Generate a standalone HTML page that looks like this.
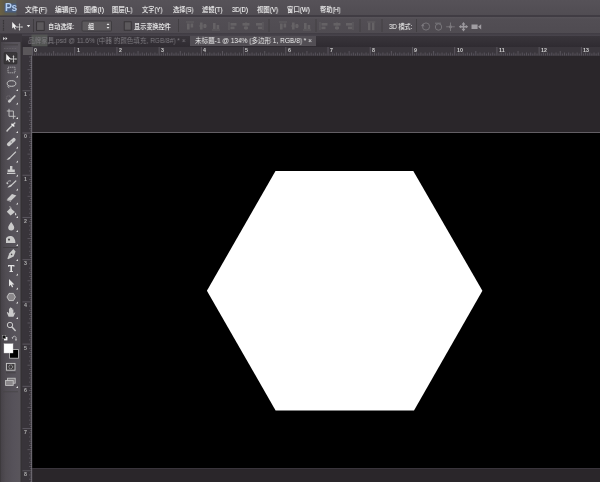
<!DOCTYPE html>
<html lang="zh-CN"><head><meta charset="utf-8"><title>Photoshop</title><style>
html,body{margin:0;padding:0;}
body{width:600px;height:482px;overflow:hidden;background:#2a262a;position:relative;font-family:"Liberation Sans", "Noto Sans CJK SC", sans-serif;font-size:7.2px;line-height:9px;color:#e6e6e6;}
div,span{position:absolute;white-space:nowrap;}
span{transform-origin:0 50%;will-change:transform;}
#menubar{left:0;top:0;width:600px;height:16px;background:linear-gradient(#565258,#504c52);}
#menuline{left:0;top:15.4px;width:600px;height:1.2px;background:#403c43;}
#optbar{left:0;top:16.6px;width:600px;height:17px;background:linear-gradient(#58545a 0,#524e54 12%,#4f4b51 100%);}
#optline{left:0;top:33.2px;width:600px;height:2.6px;background:linear-gradient(#403c43,#48444c);}
#tabrow{left:21px;top:35.6px;width:579px;height:11px;background:linear-gradient(#39353b,#2f2b31);}
#tab2{left:190px;top:36.2px;width:125.5px;height:9.6px;background:#524e54;}
#hruler{left:22px;top:46.5px;width:578px;height:9px;background:#3a363c;}
#vruler{left:22.3px;top:46.5px;width:9.7px;height:436px;background:#38343a;}
#corner{left:22.5px;top:46.5px;width:9px;height:8px;background:#5a575a;}
#toolbar{left:0;top:34px;width:21.5px;height:448px;background:linear-gradient(90deg,#444046 0,#504c52 25%,#56525a 60%,#5a565c 100%);}
#toolhead{left:0;top:34px;width:21.5px;height:8px;background:#3a363c;}
#canvas{left:32px;top:133px;width:568px;height:335px;background:#000;}
#canvastop{left:32px;top:132px;width:568px;height:1px;background:#625e64;}
.m{top:4.8px;color:#f2f2f2;transform:scaleX(0.93);text-shadow:0 0 0.6px rgba(255,255,255,0.55);}
.o{top:21.8px;color:#f2f2f2;transform:scaleX(0.85);text-shadow:0 0 0.6px rgba(255,255,255,0.55);}
.t{top:36.3px;transform:scaleX(0.91);}
.rn{font-size:5.3px;line-height:6px;color:#cfcfcf;font-weight:bold;}
svg{position:absolute;left:0;top:0;}
span{z-index:2;}
</style></head><body>
<div id="menubar"></div><div id="menuline"></div><div id="optbar"></div><div id="optline"></div>
<div id="tabrow"></div><div id="tab2"></div><div id="hruler"></div><div id="vruler"></div><div id="corner"></div>
<div id="toolbar"></div><div id="toolhead"></div>
<div id="canvastop"></div><div id="canvas"></div>
<span class="m" style="left:24.5px;transform:scaleX(0.932)">文件(F)</span>
<span class="m" style="left:55px;transform:scaleX(0.917)">编辑(E)</span>
<span class="m" style="left:84px;transform:scaleX(0.943)">图像(I)</span>
<span class="m" style="left:112px;transform:scaleX(0.884)">图层(L)</span>
<span class="m" style="left:142.3px;transform:scaleX(0.854)">文字(Y)</span>
<span class="m" style="left:172.6px;transform:scaleX(0.850)">选择(S)</span>
<span class="m" style="left:201.8px;transform:scaleX(0.873)">滤镜(T)</span>
<span class="m" style="left:232px;transform:scaleX(0.833)">3D(D)</span>
<span class="m" style="left:256.8px;transform:scaleX(0.883)">视图(V)</span>
<span class="m" style="left:287px;transform:scaleX(0.885)">窗口(W)</span>
<span class="m" style="left:319.7px;transform:scaleX(0.844)">帮助(H)</span>
<span style="left:4.6px;top:2px;font-size:10.3px;line-height:12px;font-weight:bold;color:#b4cff0;letter-spacing:-0.3px;z-index:3">Ps</span>
<span class="o" style="left:48px">自动选择:</span>
<span class="o" style="left:88px">组</span>
<span class="o" style="left:134px">显示变换控件</span>
<span class="o" style="left:388.5px;color:#dedede">3D 模式:</span>
<span class="t" style="left:28px;color:#7e7b80">品牌家具.psd @ 11.6% (中器 的颜色填充, RGB/8#) * ×</span>
<span class="t" style="left:195px;color:#f0f0f0">未标题-1 @ 134% (多边形 1, RGB/8) * ×</span>
<span class="rn" style="left:34.3px;top:46.7px">0</span>
<span class="rn" style="left:76.5px;top:46.7px">1</span>
<span class="rn" style="left:118.7px;top:46.7px">2</span>
<span class="rn" style="left:161.0px;top:46.7px">3</span>
<span class="rn" style="left:203.2px;top:46.7px">4</span>
<span class="rn" style="left:245.4px;top:46.7px">5</span>
<span class="rn" style="left:287.6px;top:46.7px">6</span>
<span class="rn" style="left:329.8px;top:46.7px">7</span>
<span class="rn" style="left:372.1px;top:46.7px">8</span>
<span class="rn" style="left:414.3px;top:46.7px">9</span>
<span class="rn" style="left:456.5px;top:46.7px">10</span>
<span class="rn" style="left:498.7px;top:46.7px">11</span>
<span class="rn" style="left:540.9px;top:46.7px">12</span>
<span class="rn" style="left:583.2px;top:46.7px">13</span>
<span class="rn" style="left:24.3px;top:91.2px;color:#aeaeae">1</span>
<span class="rn" style="left:24.3px;top:133.4px;color:#aeaeae">0</span>
<span class="rn" style="left:24.3px;top:175.6px;color:#aeaeae">1</span>
<span class="rn" style="left:24.3px;top:217.8px;color:#aeaeae">2</span>
<span class="rn" style="left:24.3px;top:260.1px;color:#aeaeae">3</span>
<span class="rn" style="left:24.3px;top:302.3px;color:#aeaeae">4</span>
<span class="rn" style="left:24.3px;top:344.5px;color:#aeaeae">5</span>
<span class="rn" style="left:24.3px;top:386.7px;color:#aeaeae">6</span>
<span class="rn" style="left:24.3px;top:428.9px;color:#aeaeae">7</span>
<span class="rn" style="left:24.3px;top:471.2px;color:#aeaeae">8</span>
<svg width="600" height="482" viewBox="0 0 600 482">
<polygon points="275.5,171 413.3,171 482.4,290.7 414,410.4 275.6,410.4 206.9,290.7" fill="#fff"/>
<path d="M34.61 53.5V55.5 M36.72 52.5V55.5 M38.83 53.5V55.5 M40.94 52.5V55.5 M43.05 53.5V55.5 M45.17 52.5V55.5 M47.28 53.5V55.5 M49.39 52.5V55.5 M51.50 53.5V55.5 M53.61 51.0V55.5 M55.72 53.5V55.5 M57.83 52.5V55.5 M59.94 53.5V55.5 M62.05 52.5V55.5 M64.16 53.5V55.5 M66.28 52.5V55.5 M68.39 53.5V55.5 M70.50 52.5V55.5 M72.61 53.5V55.5 M76.83 53.5V55.5 M78.94 52.5V55.5 M81.05 53.5V55.5 M83.16 52.5V55.5 M85.28 53.5V55.5 M87.39 52.5V55.5 M89.50 53.5V55.5 M91.61 52.5V55.5 M93.72 53.5V55.5 M95.83 51.0V55.5 M97.94 53.5V55.5 M100.05 52.5V55.5 M102.16 53.5V55.5 M104.27 52.5V55.5 M106.38 53.5V55.5 M108.50 52.5V55.5 M110.61 53.5V55.5 M112.72 52.5V55.5 M114.83 53.5V55.5 M119.05 53.5V55.5 M121.16 52.5V55.5 M123.27 53.5V55.5 M125.38 52.5V55.5 M127.50 53.5V55.5 M129.61 52.5V55.5 M131.72 53.5V55.5 M133.83 52.5V55.5 M135.94 53.5V55.5 M138.05 51.0V55.5 M140.16 53.5V55.5 M142.27 52.5V55.5 M144.38 53.5V55.5 M146.49 52.5V55.5 M148.60 53.5V55.5 M150.72 52.5V55.5 M152.83 53.5V55.5 M154.94 52.5V55.5 M157.05 53.5V55.5 M161.27 53.5V55.5 M163.38 52.5V55.5 M165.49 53.5V55.5 M167.60 52.5V55.5 M169.72 53.5V55.5 M171.83 52.5V55.5 M173.94 53.5V55.5 M176.05 52.5V55.5 M178.16 53.5V55.5 M180.27 51.0V55.5 M182.38 53.5V55.5 M184.49 52.5V55.5 M186.60 53.5V55.5 M188.71 52.5V55.5 M190.82 53.5V55.5 M192.94 52.5V55.5 M195.05 53.5V55.5 M197.16 52.5V55.5 M199.27 53.5V55.5 M203.49 53.5V55.5 M205.60 52.5V55.5 M207.71 53.5V55.5 M209.82 52.5V55.5 M211.94 53.5V55.5 M214.05 52.5V55.5 M216.16 53.5V55.5 M218.27 52.5V55.5 M220.38 53.5V55.5 M222.49 51.0V55.5 M224.60 53.5V55.5 M226.71 52.5V55.5 M228.82 53.5V55.5 M230.93 52.5V55.5 M233.04 53.5V55.5 M235.16 52.5V55.5 M237.27 53.5V55.5 M239.38 52.5V55.5 M241.49 53.5V55.5 M245.71 53.5V55.5 M247.82 52.5V55.5 M249.93 53.5V55.5 M252.04 52.5V55.5 M254.16 53.5V55.5 M256.27 52.5V55.5 M258.38 53.5V55.5 M260.49 52.5V55.5 M262.60 53.5V55.5 M264.71 51.0V55.5 M266.82 53.5V55.5 M268.93 52.5V55.5 M271.04 53.5V55.5 M273.15 52.5V55.5 M275.26 53.5V55.5 M277.38 52.5V55.5 M279.49 53.5V55.5 M281.60 52.5V55.5 M283.71 53.5V55.5 M287.93 53.5V55.5 M290.04 52.5V55.5 M292.15 53.5V55.5 M294.26 52.5V55.5 M296.38 53.5V55.5 M298.49 52.5V55.5 M300.60 53.5V55.5 M302.71 52.5V55.5 M304.82 53.5V55.5 M306.93 51.0V55.5 M309.04 53.5V55.5 M311.15 52.5V55.5 M313.26 53.5V55.5 M315.37 52.5V55.5 M317.49 53.5V55.5 M319.60 52.5V55.5 M321.71 53.5V55.5 M323.82 52.5V55.5 M325.93 53.5V55.5 M330.15 53.5V55.5 M332.26 52.5V55.5 M334.37 53.5V55.5 M336.48 52.5V55.5 M338.59 53.5V55.5 M340.71 52.5V55.5 M342.82 53.5V55.5 M344.93 52.5V55.5 M347.04 53.5V55.5 M349.15 51.0V55.5 M351.26 53.5V55.5 M353.37 52.5V55.5 M355.48 53.5V55.5 M357.59 52.5V55.5 M359.70 53.5V55.5 M361.82 52.5V55.5 M363.93 53.5V55.5 M366.04 52.5V55.5 M368.15 53.5V55.5 M372.37 53.5V55.5 M374.48 52.5V55.5 M376.59 53.5V55.5 M378.70 52.5V55.5 M380.81 53.5V55.5 M382.93 52.5V55.5 M385.04 53.5V55.5 M387.15 52.5V55.5 M389.26 53.5V55.5 M391.37 51.0V55.5 M393.48 53.5V55.5 M395.59 52.5V55.5 M397.70 53.5V55.5 M399.81 52.5V55.5 M401.93 53.5V55.5 M404.04 52.5V55.5 M406.15 53.5V55.5 M408.26 52.5V55.5 M410.37 53.5V55.5 M414.59 53.5V55.5 M416.70 52.5V55.5 M418.81 53.5V55.5 M420.92 52.5V55.5 M423.04 53.5V55.5 M425.15 52.5V55.5 M427.26 53.5V55.5 M429.37 52.5V55.5 M431.48 53.5V55.5 M433.59 51.0V55.5 M435.70 53.5V55.5 M437.81 52.5V55.5 M439.92 53.5V55.5 M442.03 52.5V55.5 M444.15 53.5V55.5 M446.26 52.5V55.5 M448.37 53.5V55.5 M450.48 52.5V55.5 M452.59 53.5V55.5 M456.81 53.5V55.5 M458.92 52.5V55.5 M461.03 53.5V55.5 M463.14 52.5V55.5 M465.25 53.5V55.5 M467.37 52.5V55.5 M469.48 53.5V55.5 M471.59 52.5V55.5 M473.70 53.5V55.5 M475.81 51.0V55.5 M477.92 53.5V55.5 M480.03 52.5V55.5 M482.14 53.5V55.5 M484.25 52.5V55.5 M486.37 53.5V55.5 M488.48 52.5V55.5 M490.59 53.5V55.5 M492.70 52.5V55.5 M494.81 53.5V55.5 M499.03 53.5V55.5 M501.14 52.5V55.5 M503.25 53.5V55.5 M505.36 52.5V55.5 M507.47 53.5V55.5 M509.59 52.5V55.5 M511.70 53.5V55.5 M513.81 52.5V55.5 M515.92 53.5V55.5 M518.03 51.0V55.5 M520.14 53.5V55.5 M522.25 52.5V55.5 M524.36 53.5V55.5 M526.47 52.5V55.5 M528.58 53.5V55.5 M530.70 52.5V55.5 M532.81 53.5V55.5 M534.92 52.5V55.5 M537.03 53.5V55.5 M541.25 53.5V55.5 M543.36 52.5V55.5 M545.47 53.5V55.5 M547.58 52.5V55.5 M549.69 53.5V55.5 M551.81 52.5V55.5 M553.92 53.5V55.5 M556.03 52.5V55.5 M558.14 53.5V55.5 M560.25 51.0V55.5 M562.36 53.5V55.5 M564.47 52.5V55.5 M566.58 53.5V55.5 M568.69 52.5V55.5 M570.80 53.5V55.5 M572.92 52.5V55.5 M575.03 53.5V55.5 M577.14 52.5V55.5 M579.25 53.5V55.5 M583.47 53.5V55.5 M585.58 52.5V55.5 M587.69 53.5V55.5 M589.80 52.5V55.5 M591.91 53.5V55.5 M594.03 52.5V55.5 M596.14 53.5V55.5 M598.25 52.5V55.5" stroke="#66626a" stroke-width="0.7" fill="none"/>
<path d="M32.50 47V55.5 M74.72 47V55.5 M116.94 47V55.5 M159.16 47V55.5 M201.38 47V55.5 M243.60 47V55.5 M285.82 47V55.5 M328.04 47V55.5 M370.26 47V55.5 M412.48 47V55.5 M454.70 47V55.5 M496.92 47V55.5 M539.14 47V55.5 M581.36 47V55.5" stroke="#6a666e" stroke-width="0.7" fill="none"/>
<path d="M29 57.00H32 M30 59.12H32 M29 61.23H32 M30 63.34H32 M29 65.45H32 M30 67.56H32 M27.5 69.67H32 M30 71.78H32 M29 73.89H32 M30 76.00H32 M29 78.11H32 M30 80.22H32 M29 82.34H32 M30 84.45H32 M29 86.56H32 M30 88.67H32 M30 92.89H32 M29 95.00H32 M30 97.11H32 M29 99.22H32 M30 101.34H32 M29 103.45H32 M30 105.56H32 M29 107.67H32 M30 109.78H32 M27.5 111.89H32 M30 114.00H32 M29 116.11H32 M30 118.22H32 M29 120.33H32 M30 122.44H32 M29 124.56H32 M30 126.67H32 M29 128.78H32 M30 130.89H32 M30 135.11H32 M29 137.22H32 M30 139.33H32 M29 141.44H32 M30 143.56H32 M29 145.67H32 M30 147.78H32 M29 149.89H32 M30 152.00H32 M27.5 154.11H32 M30 156.22H32 M29 158.33H32 M30 160.44H32 M29 162.55H32 M30 164.66H32 M29 166.78H32 M30 168.89H32 M29 171.00H32 M30 173.11H32 M30 177.33H32 M29 179.44H32 M30 181.55H32 M29 183.66H32 M30 185.78H32 M29 187.89H32 M30 190.00H32 M29 192.11H32 M30 194.22H32 M27.5 196.33H32 M30 198.44H32 M29 200.55H32 M30 202.66H32 M29 204.77H32 M30 206.88H32 M29 209.00H32 M30 211.11H32 M29 213.22H32 M30 215.33H32 M30 219.55H32 M29 221.66H32 M30 223.77H32 M29 225.88H32 M30 228.00H32 M29 230.11H32 M30 232.22H32 M29 234.33H32 M30 236.44H32 M27.5 238.55H32 M30 240.66H32 M29 242.77H32 M30 244.88H32 M29 246.99H32 M30 249.10H32 M29 251.22H32 M30 253.33H32 M29 255.44H32 M30 257.55H32 M30 261.77H32 M29 263.88H32 M30 265.99H32 M29 268.10H32 M30 270.21H32 M29 272.33H32 M30 274.44H32 M29 276.55H32 M30 278.66H32 M27.5 280.77H32 M30 282.88H32 M29 284.99H32 M30 287.10H32 M29 289.21H32 M30 291.32H32 M29 293.44H32 M30 295.55H32 M29 297.66H32 M30 299.77H32 M30 303.99H32 M29 306.10H32 M30 308.21H32 M29 310.32H32 M30 312.44H32 M29 314.55H32 M30 316.66H32 M29 318.77H32 M30 320.88H32 M27.5 322.99H32 M30 325.10H32 M29 327.21H32 M30 329.32H32 M29 331.43H32 M30 333.55H32 M29 335.66H32 M30 337.77H32 M29 339.88H32 M30 341.99H32 M30 346.21H32 M29 348.32H32 M30 350.43H32 M29 352.54H32 M30 354.66H32 M29 356.77H32 M30 358.88H32 M29 360.99H32 M30 363.10H32 M27.5 365.21H32 M30 367.32H32 M29 369.43H32 M30 371.54H32 M29 373.65H32 M30 375.77H32 M29 377.88H32 M30 379.99H32 M29 382.10H32 M30 384.21H32 M30 388.43H32 M29 390.54H32 M30 392.65H32 M29 394.76H32 M30 396.88H32 M29 398.99H32 M30 401.10H32 M29 403.21H32 M30 405.32H32 M27.5 407.43H32 M30 409.54H32 M29 411.65H32 M30 413.76H32 M29 415.87H32 M30 417.99H32 M29 420.10H32 M30 422.21H32 M29 424.32H32 M30 426.43H32 M30 430.65H32 M29 432.76H32 M30 434.87H32 M29 436.98H32 M30 439.09H32 M29 441.21H32 M30 443.32H32 M29 445.43H32 M30 447.54H32 M27.5 449.65H32 M30 451.76H32 M29 453.87H32 M30 455.98H32 M29 458.09H32 M30 460.20H32 M29 462.32H32 M30 464.43H32 M29 466.54H32 M30 468.65H32 M30 472.87H32 M29 474.98H32 M30 477.09H32 M29 479.20H32 M30 481.31H32" stroke="#66626a" stroke-width="0.7" fill="none"/>
<path d="M22.5 90.78H32 M22.5 133.00H32 M22.5 175.22H32 M22.5 217.44H32 M22.5 259.66H32 M22.5 301.88H32 M22.5 344.10H32 M22.5 386.32H32 M22.5 428.54H32 M22.5 470.76H32" stroke="#6a666e" stroke-width="0.7" fill="none"/>
<path d="M31.7 55.5V482" stroke="#85818a" stroke-width="0.7"/><path d="M32 468.5H600" stroke="#3d3940" stroke-width="0.8"/>
<g style="filter:blur(0.3px)"><rect x="0" y="34" width="1" height="448" fill="#3d3a3d"/><rect x="20.5" y="42" width="1.5" height="440" fill="#353235"/><path d="M3.2 37V40.2L5 38.6ZM5.6 37V40.2L7.4 38.6Z" fill="#e8e8e8"/><path d="M4 48.5H17" stroke="#6c696c" stroke-width="0.8" stroke-dasharray="0.8 0.8"/><rect x="3" y="44.2" width="15" height="1.2" fill="#474447"/><rect x="4" y="52.5" width="13" height="11.5" rx="1" fill="#3a373a" stroke="#2e2b2e" stroke-width="0.6"/><path d="M6.2 54V61L7.9 59.4L9 62L10 61.6L8.9 59.1H11Z" fill="#f2f2f2"/><path d="M13.5 56V62M10.7 59H16.3" stroke="#cacaca" stroke-width="0.9"/><path d="M13.5 55.2L12.4 56.6H14.6ZM13.5 62.8L12.4 61.4H14.6ZM10 59L11.3 57.9V60.1ZM17 59L15.7 57.9V60.1Z" fill="#cacaca"/><rect x="8" y="67.2" width="7" height="5.6" fill="none" stroke="#c4c4c4" stroke-width="0.8" stroke-dasharray="1.3 0.8"/><path d="M18 75.5V77.5H16Z" fill="#e0e0e0"/><ellipse cx="11.5" cy="83.5" rx="4.3" ry="2.8" fill="none" stroke="#cacaca" stroke-width="1"/><path d="M8.3 85.5C7.5 86.5 8.2 87.6 9.3 87.8" fill="none" stroke="#cacaca" stroke-width="0.8"/><path d="M18 89V91H16Z" fill="#e0e0e0"/><path d="M14.8 96L11 99.8" stroke="#cacaca" stroke-width="1.7" stroke-linecap="round"/><ellipse cx="9.6" cy="101" rx="1.9" ry="1.5" transform="rotate(-45 9.6 101)" fill="#cacaca"/><circle cx="8.5" cy="98" r="2.2" fill="none" stroke="#9a979a" stroke-width="0.5" stroke-dasharray="0.8 0.6"/><path d="M18 102.5V104.5H16Z" fill="#e0e0e0"/><path d="M9 108.8V116.3H15.6M6.8 111H13.4V118.8" fill="none" stroke="#cccccc" stroke-width="0.85"/><path d="M18 117V119H16Z" fill="#e0e0e0"/><path d="M14.8 123L8 129.8L7 131" stroke="#cacaca" stroke-width="1.5" stroke-linecap="round"/><path d="M12 124.2L13.8 126" stroke="#f0f0f0" stroke-width="1.6" stroke-linecap="round"/><path d="M18 131V133H16Z" fill="#e0e0e0"/><rect x="6" y="140.3" width="10.5" height="3.6" rx="1.8" transform="rotate(-42 11.2 142)" fill="#cacaca"/><circle cx="11.2" cy="142" r="0.7" fill="#777"/><path d="M18 146.5V148.5H16Z" fill="#e0e0e0"/><path d="M15.6 152L9.2 158.4" stroke="#cacaca" stroke-width="1.1" stroke-linecap="round"/><path d="M9.6 157.2L10.4 158.2C9.5 159.8 7.6 160 6.4 159.8C7.6 159.2 7.8 157.8 9.6 157.2Z" fill="#cacaca"/><path d="M18 160.5V162.5H16Z" fill="#e0e0e0"/><path d="M10 166H12.4V169.6H14.8V172H7.6V169.6H10ZM7 172.8H15.4V174H7Z" fill="#cacaca"/><path d="M18 174.5V176.5H16Z" fill="#e0e0e0"/><path d="M15.8 181L11 185.6" stroke="#cacaca" stroke-width="1.2" stroke-linecap="round"/><path d="M11.2 184.6L12 185.6C11 187.2 9 187.6 7.4 187.4C8.8 186.6 9.2 185.2 11.2 184.6Z" fill="#cacaca"/><path d="M7 183.5A3 3 0 0 1 11 181" fill="none" stroke="#cacaca" stroke-width="0.8"/><path d="M6.2 182.4L7.2 184.6L8.6 183Z" fill="#cacaca"/><path d="M18 188.5V190.5H16Z" fill="#e0e0e0"/><path d="M12 194L16.4 195.6L11 200.8L6.8 199.4Z" fill="#cacaca"/><path d="M6.8 199.4L11 200.8V202L6.8 200.6Z" fill="#a9a6a9"/><path d="M18 202.5V204.5H16Z" fill="#e0e0e0"/><path d="M10.4 208L15 212L10.6 215.6L6.8 211.8Z" fill="#cacaca"/><path d="M9 207.2C9.6 206.4 11 206.6 11 208V210" fill="none" stroke="#cacaca" stroke-width="0.7"/><path d="M15.4 212.4C16.4 213.6 16.6 215 15.8 215.6C15 215 15 213.6 15.4 212.4Z" fill="#f0f0f0"/><path d="M18 216V218H16Z" fill="#e0e0e0"/><path d="M11.2 222C12.6 224.2 14.2 225.8 14.2 227.4A3 3 0 0 1 8.2 227.4C8.2 225.8 9.8 224.2 11.2 222Z" fill="#cacaca"/><path d="M18 230V232H16Z" fill="#e0e0e0"/><path d="M6 243V238.6C6.6 236.4 9 235.6 11 236C13.8 236.6 15.4 239.6 15.4 243Z" fill="#cacaca"/><circle cx="9" cy="239.6" r="1.1" fill="#4a474a"/><path d="M18 244V246H16Z" fill="#e0e0e0"/><rect x="3" y="247" width="15" height="0.8" fill="#3f3c3f"/><path d="M13.4 249L15.6 251.4L13.6 256.6L8 259.2L7.4 258.4L9.4 253.2Z" fill="#cacaca"/><circle cx="11.6" cy="254.4" r="0.8" fill="#4a474a"/><path d="M18 259V261H16Z" fill="#e0e0e0"/><path d="M8 265H14.4V266.8H13.6V266.2H12V271H12.9V272H9.5V271H10.4V266.2H8.8V266.8H8Z" fill="#e2e2e2"/><path d="M18 273.5V275.5H16Z" fill="#e0e0e0"/><path d="M9 279V286.4L10.8 284.8L12 287.4L13.2 286.8L12 284.4H14.4Z" fill="#e2e2e2"/><path d="M18 287.5V289.5H16Z" fill="#e0e0e0"/><path d="M9 293.4H13.4L15.4 297L13.4 300.6H9L7 297Z" fill="#8a878a" stroke="#cacaca" stroke-width="0.9"/><path d="M18 301.5V303.5H16Z" fill="#e0e0e0"/><path d="M8.6 316.8L6.8 312.6L7.8 312L9 313.6V308.6H10V312V307.4H11.2V312V308H12.3V312.2V309.4H13.4V313.6C14 313 14.8 312 15.4 312.6L13.4 316.8Z" fill="#cacaca"/><path d="M18 317V319H16Z" fill="#e0e0e0"/><circle cx="10" cy="325" r="2.7" fill="none" stroke="#cacaca" stroke-width="1"/><path d="M12 327L15.2 330.4" stroke="#cacaca" stroke-width="1.5" stroke-linecap="round"/><rect x="4" y="337" width="3.4" height="3.4" fill="#f4f4f4"/><rect x="2.4" y="335.4" width="3.4" height="3.4" fill="#111" stroke="#bbb" stroke-width="0.4"/><path d="M12.6 337.4C13.4 335.8 15.4 335.8 16 337.4V340" fill="none" stroke="#cacaca" stroke-width="0.8"/><path d="M11.6 337.2L13.6 337.4L12.4 339ZM14.8 339.4H17.2L16 341Z" fill="#cacaca"/><rect x="9.6" y="349.6" width="8.8" height="8.6" fill="#000" stroke="#c4c4c4" stroke-width="0.8"/><rect x="4" y="343.8" width="9" height="9.2" fill="#fff" stroke="#d0d0d0" stroke-width="0.4"/><rect x="6.4" y="363.4" width="8.6" height="6.8" fill="#3f3c3f" stroke="#cacaca" stroke-width="0.9"/><circle cx="10.7" cy="366.8" r="1.9" fill="none" stroke="#cacaca" stroke-width="0.8" stroke-dasharray="1 0.6"/><rect x="6" y="372.4" width="9.6" height="0.8" fill="#423f42"/><rect x="7.6" y="378.2" width="7.6" height="5" fill="#7c797c" stroke="#cacaca" stroke-width="0.8"/><rect x="5.6" y="380.4" width="7.6" height="5" fill="#8a878a" stroke="#cacaca" stroke-width="0.8"/><path d="M18 386V388H16Z" fill="#e0e0e0"/><rect x="3" y="391.4" width="15" height="0.8" fill="#474447"/></g>
<defs><linearGradient id="lg1" x1="0" x2="1" y1="0" y2="0"><stop offset="0" stop-color="#6b6142"/><stop offset="0.3" stop-color="#5d5a4c"/><stop offset="1" stop-color="#575a58"/></linearGradient></defs>
<rect x="0" y="0" width="16.5" height="15.4" fill="url(#lg1)"/><rect x="4.6" y="3.4" width="11.6" height="9" rx="1" fill="#4a5f80" style="filter:blur(0.6px)"/>
<g style="filter:blur(0.3px)"><path d="M3.5 20V31" stroke="#2f2c2f" stroke-width="1.2" stroke-dasharray="0.8 0.8"/><path d="M33.5 19V32" stroke="#3b383b" stroke-width="0.8"/><path d="M12.2 22V28.6L13.8 27.2L14.8 29.6L15.8 29.2L14.8 26.8H16.8Z" fill="#f2f2f2"/><path d="M19.5 24V30M16.8 27H22.2" stroke="#cfcfcf" stroke-width="0.8"/><path d="M19.5 23.2L18.5 24.5H20.5ZM19.5 30.8L18.5 29.5H20.5ZM16 27L17.3 26V28ZM23 27L21.7 26V28Z" fill="#cfcfcf"/><path d="M26.8 25H30.2L28.5 27.2Z" fill="#f2f2f2"/><rect x="36.6" y="21.8" width="7.6" height="8.6" fill="#5c595c" stroke="#343134" stroke-width="0.9"/><rect x="82" y="21" width="29.5" height="10" rx="1" fill="#5d5a5d" stroke="#39363a" stroke-width="0.8"/><path d="M106.6 25L108 23.2L109.4 25ZM106.6 27L108 28.8L109.4 27Z" fill="#ececec"/><rect x="124.2" y="21.8" width="7" height="8.4" fill="#5c595c" stroke="#343134" stroke-width="0.9"/><path d="M178.5 19V32M269 19V32M316 19V32M360 19V32M382 19V32M416.5 19V32" stroke="#3f3c3f" stroke-width="0.8"/><path d="M186 22H194" stroke="#656265" stroke-width="0.9"/><rect x="187" y="23.5" width="2.6" height="6" fill="#656265"/><rect x="190.6" y="23.5" width="2.6" height="4" fill="#656265"/><path d="M199 26H207" stroke="#656265" stroke-width="0.9"/><rect x="200" y="22.5" width="2.6" height="7" fill="#656265"/><rect x="203.6" y="24" width="2.6" height="4" fill="#656265"/><path d="M212 30H220" stroke="#656265" stroke-width="0.9"/><rect x="213" y="23" width="2.6" height="6" fill="#656265"/><rect x="216.6" y="25" width="2.6" height="4" fill="#656265"/><path d="M229 22V30" stroke="#656265" stroke-width="0.9"/><rect x="230.5" y="23" width="6" height="2.6" fill="#656265"/><rect x="230.5" y="26.6" width="4" height="2.6" fill="#656265"/><path d="M246 22V30" stroke="#656265" stroke-width="0.9"/><rect x="242.5" y="23" width="7" height="2.6" fill="#656265"/><rect x="244" y="26.6" width="4" height="2.6" fill="#656265"/><path d="M263 22V30" stroke="#656265" stroke-width="0.9"/><rect x="256" y="23" width="6" height="2.6" fill="#656265"/><rect x="258" y="26.6" width="4" height="2.6" fill="#656265"/><path d="M279 22H287" stroke="#656265" stroke-width="0.9"/><rect x="280" y="23.5" width="2.6" height="6" fill="#656265"/><rect x="283.6" y="23.5" width="2.6" height="4" fill="#656265"/><path d="M291 26H299" stroke="#656265" stroke-width="0.9"/><rect x="292" y="22.5" width="2.6" height="7" fill="#656265"/><rect x="295.6" y="24" width="2.6" height="4" fill="#656265"/><path d="M303 30H311" stroke="#656265" stroke-width="0.9"/><rect x="304" y="23" width="2.6" height="6" fill="#656265"/><rect x="307.6" y="25" width="2.6" height="4" fill="#656265"/><path d="M320 22V30" stroke="#656265" stroke-width="0.9"/><rect x="321.5" y="23" width="6" height="2.6" fill="#656265"/><rect x="321.5" y="26.6" width="4" height="2.6" fill="#656265"/><path d="M337 22V30" stroke="#656265" stroke-width="0.9"/><rect x="333.5" y="23" width="7" height="2.6" fill="#656265"/><rect x="335" y="26.6" width="4" height="2.6" fill="#656265"/><path d="M353 22V30" stroke="#656265" stroke-width="0.9"/><rect x="346" y="23" width="6" height="2.6" fill="#656265"/><rect x="348" y="26.6" width="4" height="2.6" fill="#656265"/><rect x="368" y="22.6" width="2.4" height="7.6" fill="#656265"/><rect x="372" y="22.6" width="2.4" height="7.6" fill="#656265"/><path d="M367 22H375.4" stroke="#656265" stroke-width="0.8"/><circle cx="426" cy="26.5" r="3.6" fill="none" stroke="#7c797e" stroke-width="0.9"/><path d="M421 26L423 23.5L424.4 26.4Z" fill="#7c797e"/><circle cx="438.5" cy="27" r="3.2" fill="none" stroke="#7c797e" stroke-width="0.9"/><path d="M435 23.2H441" stroke="#7c797e" stroke-width="0.9"/><path d="M450.5 22.5V31M446.2 26.8H454.8" stroke="#7c797e" stroke-width="0.9"/><circle cx="450.5" cy="26.8" r="1.6" fill="#7c797e"/><path d="M463.5 22L465.4 24.4H464.3V25.9H465.8V24.8L468.2 26.7L465.8 28.6V27.5H464.3V29H465.4L463.5 31.4L461.6 29H462.7V27.5H461.2V28.6L458.8 26.7L461.2 24.8V25.9H462.7V24.4H461.6Z" fill="#9c999e"/><path d="M471.5 24.6H477.6V29H471.5ZM481.2 24.2V29.4L478 26.8Z" fill="#a09da2"/></g>
<rect x="31.5" y="34.6" width="16" height="11.8" fill="#565956" opacity="0.9" style="filter:blur(0.5px)"/>
</svg>
</body></html>
